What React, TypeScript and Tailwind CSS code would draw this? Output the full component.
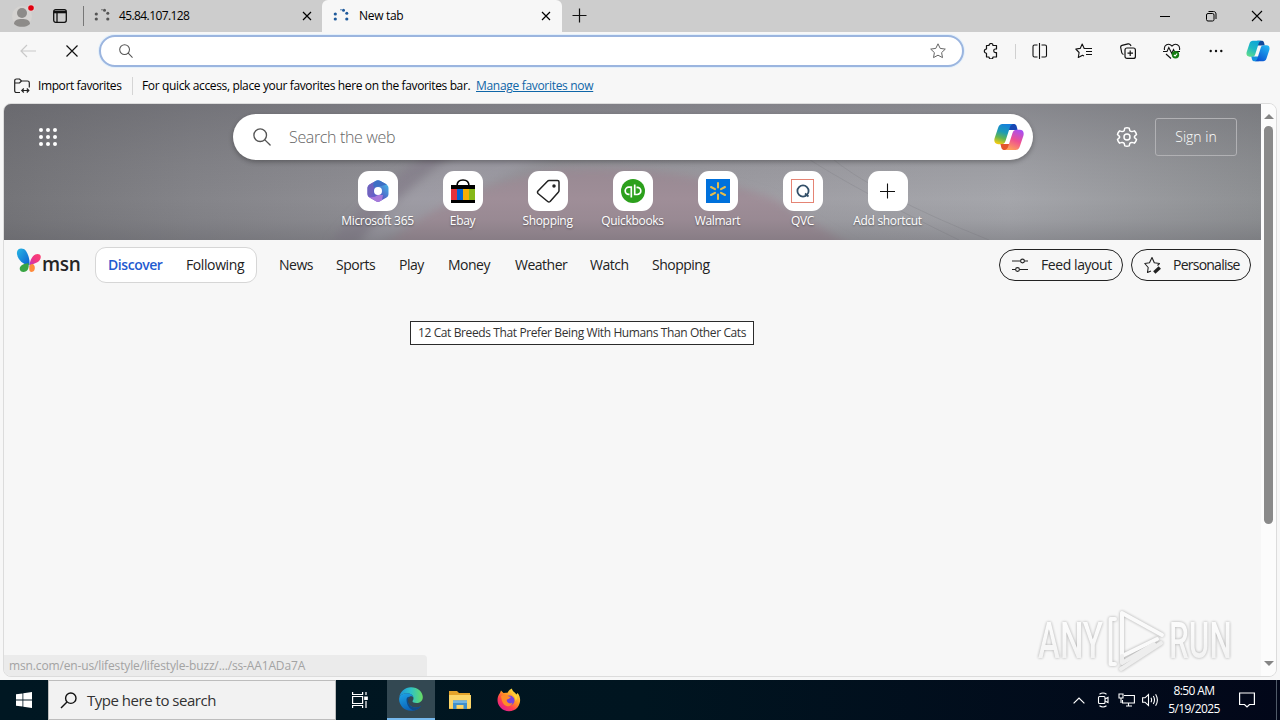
import React from 'react';

const font = "font-['Open_Sans','Noto_Sans',sans-serif]";

interface IconProps {
  className?: string;
}

const navItems = [
  { label: 'News', width: 'w-[57px]' },
  { label: 'Sports', width: 'w-[63px]' },
  { label: 'Play', width: 'w-[49px]' },
  { label: 'Money', width: 'w-[67px]' },
  { label: 'Weather', width: 'w-[75px]' },
  { label: 'Watch', width: 'w-[62px]' },
  { label: 'Shopping', width: 'w-[62px]' },
];

const LoadingDots = ({ className }: IconProps) => (
  <svg width="16" height="16" viewBox="0 0 16 16" className={className} fill="currentColor">
    <circle cx="2.3" cy="6" r="1.6" />
    <circle cx="2.3" cy="11" r="1.6" />
    <circle cx="8" cy="1.800" r="0.700" />
    <circle cx="10.500" cy="2.200" r="1.500" />
    <circle cx="13.800" cy="5.300" r="1.500" />
    <circle cx="13.800" cy="11" r="1.600" />
  </svg>
);

const CloseIcon = ({ className }: IconProps) => (
  <svg width="10" height="10" viewBox="0 0 10 10" className={className} stroke="currentColor" strokeWidth="1.2">
    <path d="M1 1l8 8M9 1L1 9" />
  </svg>
);

const SearchIcon = ({ className }: IconProps) => (
  <svg viewBox="0 0 20 20" className={className} fill="none" stroke="currentColor" strokeWidth="1.5" strokeLinecap="round">
    <circle cx="8" cy="8" r="7" />
    <path d="M13.200 13.200L19 19" />
  </svg>
);

const CopilotBlue = () => (
  <svg width="24" height="22" viewBox="0 0 30 28">
    <defs>
      <linearGradient id="cbLeft" x1="0.7" y1="0" x2="0.2" y2="1">
        <stop offset="0" stopColor="#0ca5d8" />
        <stop offset="0.5" stopColor="#1fb8c4" />
        <stop offset="1" stopColor="#5fdc8c" />
      </linearGradient>
      <linearGradient id="cbRight" x1="0.8" y1="0" x2="0.2" y2="1">
        <stop offset="0" stopColor="#21b4f3" />
        <stop offset="1" stopColor="#0a4fd0" />
      </linearGradient>
    </defs>
    <path d="M14 1h5.500c2.600 0 3.200 1.500 4 6h-9z" fill="#11489a" />
    <path d="M8.500 1H19c-2 .7-2.800 2-3.500 4.500L11.500 18c-.8 2.300-2 3.200-4 3.200H4.200C.9 21.200-.3 18.600.6 15.300L4.200 4.500C5 2.200 6.300 1 8.500 1z" fill="url(#cbLeft)" />
    <path d="M16 27h-5.500c-2.600 0-3.200-1.500-4-6h9z" fill="#1592df" />
    <path d="M21.500 27H11c2-.7 2.800-2 3.500-4.500L18.500 10c.8-2.300 2-3.200 4-3.200h3.300c3.300 0 4.500 2.600 3.600 5.900L25.800 23.500c-.8 2.300-2.100 3.500-4.300 3.500z" fill="url(#cbRight)" />
  </svg>
);

const CopilotColor = () => (
  <svg width="30" height="28" viewBox="0 0 30 28">
    <defs>
      <linearGradient id="ccLeft" x1="0.6" y1="0" x2="0.3" y2="1">
        <stop offset="0" stopColor="#1580dc" />
        <stop offset="0.4" stopColor="#1d9bb5" />
        <stop offset="0.7" stopColor="#64b550" />
        <stop offset="1" stopColor="#f4cb12" />
      </linearGradient>
      <linearGradient id="ccRight" x1="0.7" y1="0" x2="0.3" y2="1">
        <stop offset="0" stopColor="#a94ff0" />
        <stop offset="0.5" stopColor="#ee5091" />
        <stop offset="1" stopColor="#ffa05a" />
      </linearGradient>
    </defs>
    <path d="M14 1h5.500c2.600 0 3.200 1.500 4 6h-9z" fill="#1747b4" />
    <path d="M8.500 1H19c-2 .7-2.800 2-3.500 4.500L11.500 18c-.8 2.300-2 3.200-4 3.200H4.200C.9 21.200-.3 18.600.6 15.300L4.200 4.500C5 2.200 6.300 1 8.500 1z" fill="url(#ccLeft)" />
    <path d="M16 27h-5.500c-2.600 0-3.200-1.500-4-6h9z" fill="#e4552b" />
    <path d="M21.500 27H11c2-.7 2.800-2 3.500-4.500L18.500 10c.8-2.300 2-3.200 4-3.200h3.300c3.300 0 4.500 2.600 3.600 5.900L25.800 23.500c-.8 2.300-2.100 3.500-4.300 3.500z" fill="url(#ccRight)" />
  </svg>
);

const TabStrip = () => (
  <div className="flex h-8 shrink-0 bg-[#cdcdcd]">
    <div className="flex w-[83px] items-center pl-[12px]">
      <svg width="24" height="24" viewBox="0 0 24 24">
        <circle cx="10" cy="12" r="10" fill="#d5d3d1" />
        <circle cx="10" cy="9" r="5" fill="#8d8b89" />
        <path d="M2 20c0-4 3.500-5 8-5s8 1 8 5c-2 2-5 2.800-8 2.800S4 22 2 20z" fill="#8d8b89" />
        <circle cx="19" cy="4" r="3.600" fill="#e8d0d0" />
        <circle cx="19" cy="4" r="2.800" fill="#e0000f" />
      </svg>
      <svg width="14" height="14" viewBox="0 0 14 14" className="ml-[17px]" fill="none" stroke="#111" strokeWidth="1.300">
        <rect x="0.700" y="0.700" width="12.600" height="12.600" rx="2" />
        <path d="M1 3h12" strokeWidth="2.600" />
        <path d="M4 4v9" />
      </svg>
    </div>
    <div className="flex h-[31px] w-[239px] items-center">
      <div className="h-5 w-px bg-[#777]" />
      <LoadingDots className="ml-[10px] text-[#555]" />
      <span className="ml-[9px] w-[183px] text-xs tracking-[-0.600px] text-black">45.84.107.128</span>
      <CloseIcon className="text-black" />
    </div>
    <div className="flex h-8 w-[240px] items-center rounded-t-[6px] bg-[#f7f7f7]">
      <LoadingDots className="ml-[11px] text-[#1f5a9c]" />
      <span className="ml-[10px] w-[182px] text-xs tracking-[-0.300px] text-black">New tab</span>
      <CloseIcon className="text-black" />
    </div>
    <div className="flex h-[31px] flex-1 items-center pl-[10px]">
      <svg width="15" height="15" viewBox="0 0 15 15" stroke="#111" strokeWidth="1.200">
        <path d="M7.500 0.500v14M0.500 7.500h14" />
      </svg>
    </div>
    <div className="flex w-[138px] items-center justify-around text-black">
      <svg width="12" height="12" viewBox="0 0 12 12" stroke="currentColor">
        <path d="M1 6.500h10" />
      </svg>
      <svg width="12" height="12" viewBox="0 0 12 12" fill="none" stroke="currentColor">
        <rect x="1.500" y="3.500" width="7.500" height="7.500" rx="1.500" />
        <path d="M3.500 1.500h5c1.500 0 2.500 1 2.500 2.500v5" />
      </svg>
      <svg width="12" height="12" viewBox="0 0 12 12" stroke="currentColor" strokeWidth="1.100">
        <path d="M1 1l10 10M11 1L1 11" />
      </svg>
    </div>
  </div>
);

const Toolbar = () => (
  <div className="flex h-[38px] shrink-0 items-center text-[#222]">
    <svg width="16" height="14" viewBox="0 0 16 14" className="ml-[20px]" fill="none" stroke="#c9c9c9" strokeWidth="1.200">
      <path d="M7 1L1 7l6 6M1 7h15" />
    </svg>
    <svg width="12" height="12" viewBox="0 0 12 12" className="ml-[30px]" stroke="#111" strokeWidth="1.200">
      <path d="M0.500 0.500l11 11M11.500 0.500l-11 11" />
    </svg>
    <div className="ml-[21px] flex h-8 w-[865px] items-center justify-between rounded-full border-2 border-[#9bb5df] bg-white pr-[16px] pl-[18px] shadow-[0_0_0_1px_#e3f0fb]">
      <SearchIcon className="h-[14px] w-[14px] text-[#555]" />
      <svg width="16" height="16" viewBox="0 0 16 16" fill="none" stroke="#666" strokeLinejoin="round">
        <path d="M8 .8l2.200 4.600 5.100.7-3.700 3.500.9 5L8 12.200l-4.500 2.400.9-5L.7 6.100l5.100-.7z" />
      </svg>
    </div>
    {/* Extensions */}
    <svg width="16" height="16" viewBox="0 0 16 16" className="ml-[19px]" fill="none" stroke="#111" strokeWidth="1.200" strokeLinejoin="round">
      <path d="M3.500 2.500H6a2 2 0 0 1 4 0h3.500V6H12.500a1.800 1.800 0 0 0 0 3.600h1v4.400H10a2 2 0 0 1-4 0H3.500v-3.700a2 2 0 0 1 0-4.300z" />
    </svg>
    <div className="ml-[16px] h-[15px] w-px bg-[#d0d0d0]" />
    {/* Split screen */}
    <svg width="16" height="16" viewBox="0 0 16 16" className="ml-[16px]" fill="none" stroke="#111" strokeWidth="1.100">
      <path d="M7.500 0v16M5.500 2H2.500Q1 2 1 3.500v9Q1 14 2.500 14h3M9.500 2h3.500Q14.500 2 14.500 3.500v9q0 1.500-1.500 1.500H9.500" />
    </svg>
    <svg width="17" height="16" viewBox="0 0 17 16" className="ml-[27px]" fill="none" stroke="#111" strokeWidth="1.100" strokeLinejoin="round">
      <path d="M11 5.500H9.200L7.200 1 5.200 5.400.8 6l3.300 3.500-.8 5 4.200-2.300 1.500.8M11 5.500h6M11 8.500h6M11 11.500h6" />
    </svg>
    {/* Collections */}
    <svg width="16" height="16" viewBox="0 0 16 16" className="ml-[28px]" fill="none" stroke="#111" strokeWidth="1.200">
      <rect x="5" y="5" width="10.400" height="10.400" rx="2" />
      <path d="M10.200 7.500v5.500M7.500 10.200H13M3.500 11.500Q2 11 1.700 9.500L.7 4.500Q.4 2.800 2 2.400l6-1.500Q9.700.5 10.500 2l.5 1" />
    </svg>
    {/* Browser essentials */}
    <svg width="18" height="16" viewBox="0 0 18 16" className="ml-[27px]" fill="none" stroke="#111" strokeWidth="1.100">
      <path d="M1.500 7C.5 2 5.500-.5 9 3c3.500-3.500 8.500-1 7.500 4M0 8.500h4l1.800-4 3 6 1.700-4 1 2H17M3 11l5 4.500" />
      <circle cx="12.500" cy="11.800" r="3.700" fill="#137c10" stroke="none" />
      <path d="M10.900 12l1.200 1 2-2.400" stroke="#fff" />
    </svg>
    <svg width="14" height="4" viewBox="0 0 14 4" className="ml-[28px]" fill="#111">
      <circle cx="1.700" cy="2" r="1.200" />
      <circle cx="7" cy="2" r="1.200" />
      <circle cx="12.300" cy="2" r="1.200" />
    </svg>
    <div className="ml-[23px]">
      <CopilotBlue />
    </div>
  </div>
);

const FavoritesBar = () => (
  <div className="flex h-[33px] shrink-0 items-center pb-[1px] text-xs text-black">
    <svg width="16" height="16" viewBox="0 0 16 16" className="ml-[14px]" fill="none" stroke="#222" strokeWidth="1.200">
      <path d="M6 14.500H2.500Q.7 14.500 .7 12.700V2.800Q.7 1 2.500 1h3L7.500 3h6q1.800 0 1.800 1.800V9.500M.7 5h4.800L7.500 3M7.800 12.500h7M9.800 10.500l-2 2 2 2M12.800 10.500l2 2-2 2" />
    </svg>
    <span className="ml-[8px] w-[94px] tracking-[-0.400px] whitespace-nowrap">Import favorites</span>
    <div className="h-[18px] w-px bg-[#d5d5d5]" />
    <span className="ml-[9px] w-[334px] tracking-[-0.360px] whitespace-nowrap">
      For quick access, place your favorites here on the favorites bar.
    </span>
    <a className="tracking-[-0.310px] whitespace-nowrap text-[#0f66a8] underline">Manage favorites now</a>
  </div>
);

// Blurred artwork behind the search box
const HeroBackdrop = () => (
  <svg className="absolute inset-0" width="1257" height="136" viewBox="0 0 1257 136" preserveAspectRatio="none">
    <defs>
      <linearGradient id="heroBase" x1="0" y1="0" x2="1" y2="0">
        <stop offset="0" stopColor="#747478" />
        <stop offset="0.150" stopColor="#848489" />
        <stop offset="0.350" stopColor="#949399" />
        <stop offset="0.600" stopColor="#9f9ea4" />
        <stop offset="0.800" stopColor="#a5a6ab" />
        <stop offset="1" stopColor="#8e9093" />
      </linearGradient>
      <linearGradient id="heroShade" x1="0" y1="0" x2="0" y2="1">
        <stop offset="0" stopColor="#5a5a61" stopOpacity="0.400" />
        <stop offset="0.450" stopColor="#606066" stopOpacity="0.120" />
        <stop offset="0.700" stopColor="#606066" stopOpacity="0" />
        <stop offset="0.850" stopColor="#606066" stopOpacity="0.100" />
        <stop offset="1" stopColor="#5c5c62" stopOpacity="0.350" />
      </linearGradient>
      <filter id="heroBlur">
        <feGaussianBlur stdDeviation="4" />
      </filter>
    </defs>
    <rect width="1257" height="136" fill="url(#heroBase)" />
    <g filter="url(#heroBlur)">
      <path d="M325 140Q380 70 450 35l30-5Q400 80 355 140z" fill="#857d8c" opacity="0.600" />
      <path d="M355 140Q400 80 480 35L620 30Q500 60 375 140z" fill="#a5a3ad" opacity="0.600" />
      <path d="M372 150Q440 82 560 65Q680 60 770 95L860 150z" fill="#9f8e98" />
    </g>
    <path d="M800 52Q850 85 955 136M825 52Q870 90 985 136" stroke="#85838a" strokeOpacity="0.350" fill="none" />
    <rect width="1257" height="136" fill="url(#heroShade)" />
  </svg>
);

const shortcuts = [
  {
    label: 'Microsoft 365',
    icon: (
      <svg width="24" height="24" viewBox="0 0 24 24">
        <defs>
          <linearGradient id="m365" x1="0" y1="1" x2="1" y2="0">
            <stop offset="0" stopColor="#8a5bd0" />
            <stop offset="0.450" stopColor="#5260c4" />
            <stop offset="1" stopColor="#42c8ef" />
          </linearGradient>
        </defs>
        <path d="M10 1.800q2-1.200 4 0l6.500 3.600q2 1.200 2 3.300v6.600q0 2.100-2 3.300L14 22.200q-2 1.200-4 0l-6.500-3.600q-2-1.200-2-3.300V8.700q0-2.100 2-3.300z" fill="url(#m365)" />
        <path d="M10 1.800Q5.500 4.500 8 8L7 14l-4 4q-1.500-1-1.500-3V8.700q0-2.100 2-3.300z" fill="#6f62be" />
        <path d="M10 1.800Q6 5 8 8l7-1 6-1.500L14 1.800q-2-1.200-4 0z" fill="#3d6fc5" />
        <path d="M3 18q5 1 9-2h5l-1 5-2 1.200q-2 1.200-4 0l-6.500-3.600z" fill="#a778da" />
        <circle cx="12" cy="12" r="4" fill="#fff" />
      </svg>
    ),
  },
  {
    label: 'Ebay',
    icon: (
      <svg width="24" height="26" viewBox="0 0 24 26">
        <path d="M6 8Q6 2 12 2t6 6" fill="none" stroke="#000" strokeWidth="1.600" />
        <path d="M0 7h24v18H0z" fill="#000" />
        <path d="M0 11h6v11H0z" fill="#e53238" />
        <path d="M6 11h6v11H6z" fill="#0064d2" />
        <path d="M12 11h6v11h-6z" fill="#f5af02" />
        <path d="M18 11h6v11h-6z" fill="#86b817" />
      </svg>
    ),
  },
  {
    label: 'Shopping',
    icon: (
      <svg width="24" height="24" viewBox="0 0 24 24" fill="none" stroke="#222" strokeWidth="1.500" strokeLinejoin="round">
        <path d="M13 1.500h8.500Q23 1.500 23 3v8.500q0 1-.7 1.700l-8.200 9.300q-1.200 1-2.400 0L2 14.500q-1-1.200 0-2.400L11.500 2.200q.6-.7 1.500-.7z" />
        <circle cx="18" cy="7" r="1" fill="#222" />
      </svg>
    ),
  },
  {
    label: 'Quickbooks',
    icon: (
      <svg width="24" height="24" viewBox="0 0 24 24" fill="none" stroke="#fff" strokeWidth="1.700">
        <circle cx="12" cy="12" r="12" fill="#2ca01c" stroke="none" />
        <path d="M10.300 18.500V8.200H7.800a3.600 3.600 0 0 0 0 7.200h.7M13.700 5.500v10h2.500a3.600 3.600 0 0 0 0-7.200h-.7" />
      </svg>
    ),
  },
  {
    label: 'Walmart',
    icon: (
      <svg width="24" height="24" viewBox="0 0 24 24" stroke="#e5bd4c" strokeWidth="2" strokeLinecap="round">
        <rect width="24" height="24" fill="#0071dc" stroke="none" />
        <path d="M12 4v4.500M12 15.500V20M5 8l4 2.200M15 13.800l4 2.200M5 16l4-2.200M15 10.200L19 8" />
      </svg>
    ),
  },
  {
    label: 'QVC',
    icon: (
      <svg width="24" height="24" viewBox="0 0 24 24" fill="none">
        <rect x="0.500" y="0.500" width="22" height="23" stroke="#e58474" />
        <circle cx="12" cy="12" r="5.600" stroke="#335069" strokeWidth="1.800" />
        <path d="M14 14.500l3.500 3" stroke="#335069" strokeWidth="1.800" />
      </svg>
    ),
  },
  {
    label: 'Add shortcut',
    icon: (
      <svg width="16" height="16" viewBox="0 0 16 16" stroke="#111" strokeWidth="1.100">
        <path d="M7.500 .5v15M0 8.500h15" />
      </svg>
    ),
  },
];

const Hero = () => (
  <div className="relative h-[136px] shrink-0 overflow-hidden">
    <HeroBackdrop />
    <div className="relative mt-[10px] flex h-[46px] items-center pl-[35px] text-white">
      <svg width="18" height="18" viewBox="0 0 18 18" fill="#fff">
        {[2, 9, 16].map((cy) => [2, 9, 16].map((cx) => <circle key={`${cx}-${cy}`} cx={cx} cy={cy} r="2" />))}
      </svg>
      <div className="ml-[176px] flex h-[46px] w-[800px] items-center rounded-full bg-white pr-[9px] pl-[20px] shadow-[0_2px_5px_rgba(0,0,0,0.300)]">
        <SearchIcon className="h-[18px] w-[18px] text-[#555]" />
        <span className="ml-[18px] flex-1 text-base font-light tracking-[-0.350px] text-[#666]">Search the web</span>
        <CopilotColor />
      </div>
      <svg width="22" height="22" viewBox="0 0 24 24" className="ml-[83px]" fill="none" stroke="#fff" strokeWidth="1.600" strokeLinejoin="round">
        <path d="M9.600 2.300Q12 1.600 14.400 2.300l.7 2.900q1 1 2.300.9l2.700-.8q1.700 1.700 2.300 4L20.200 11.300q-.3.700 0 1.400l2.200 2q-.6 2.300-2.300 4l-2.700-.8q-1.300-.1-2.300.9l-.7 2.900q-2.400.7-4.800 0l-.7-2.900q-1-1-2.300-.9l-2.700.8q-1.700-1.700-2.300-4l2.200-2q.3-.7 0-1.400l-2.200-2q.6-2.300 2.300-4l2.700.8q1.300.1 2.300-.9z" />
        <circle cx="12" cy="12" r="3.300" />
      </svg>
      <button className="ml-[17px] h-[38px] w-[82px] rounded-[3px] border border-[#b1b1b4] text-sm font-light">Sign in</button>
    </div>
    <div className="relative mt-[11px] flex pl-[331px]">
      {shortcuts.map((item) => (
        <div key={item.label} className="flex w-[85px] flex-col items-center">
          <div className="flex h-10 w-10 items-center justify-center rounded-[11px] bg-white">{item.icon}</div>
          <span className="mt-[1px] text-xs leading-[18px] tracking-[-0.320px] whitespace-nowrap text-white [text-shadow:0_1px_2px_rgba(0,0,0,0.400)]">
            {item.label}
          </span>
        </div>
      ))}
    </div>
  </div>
);

const MsnLogo = () => (
  <div className="flex h-[30px] w-[70px]">
    <svg width="26" height="28" viewBox="0 0 26 28">
      <defs>
        <linearGradient id="wingBlue" x1="0" y1="0" x2="1" y2="1">
          <stop offset="0" stopColor="#27b7e4" />
          <stop offset="1" stopColor="#0c5fd0" />
        </linearGradient>
        <linearGradient id="wingPink" x1="0" y1="1" x2="1" y2="0">
          <stop offset="0" stopColor="#b03bd0" />
          <stop offset="0.500" stopColor="#f03585" />
          <stop offset="1" stopColor="#ff4270" />
        </linearGradient>
      </defs>
      <path d="M1 6C0 0 7-1 10 3c2 3 4 8 3.500 14C7 17 2 12 1 6z" fill="url(#wingBlue)" />
      <path d="M12.500 15c1 5-1 9-5 9-4.500 0-5-5-1.500-7 2-1.500 4-1 6.500-2z" fill="#39a544" />
      <path d="M13.500 19c0-7 3.500-13 8-13 4.500 0 4 5 1 7.500-3 2-6 2-9 5.500z" fill="url(#wingPink)" />
      <path d="M13.500 18c1-2.500 4-3 5 0s-.5 6-3 6-2.500-3.500-2-6z" fill="#ff8b3d" />
    </svg>
    <span className="mt-[4px] text-[19px] leading-[24px] font-semibold tracking-[-0.300px] text-[#252525]">msn</span>
  </div>
);

const FeedNav = () => (
  <div className="flex h-[50px] shrink-0 items-center pr-[10px] pl-[12px] text-sm text-[#222]">
    <div className="mt-[-4px]">
      <MsnLogo />
    </div>
    <div className="ml-[9px] flex h-[36px] w-[162px] items-center rounded-[11px] border border-[#d6d6d6] bg-white pl-[12px]">
      <span className="w-[78px] font-semibold tracking-[-0.450px] text-[#1f5bd0]">Discover</span>
      <span className="tracking-[-0.400px]">Following</span>
    </div>
    <div className="ml-[22px] flex flex-1">
      {navItems.map((item) => (
        <span key={item.label} className={`${item.width} tracking-[-0.500px] whitespace-nowrap`}>
          {item.label}
        </span>
      ))}
    </div>
    <button className="flex h-8 w-[124px] items-center rounded-full border border-[#222] pl-[12px] tracking-[-0.420px] whitespace-nowrap">
      <svg width="16" height="16" viewBox="0 0 16 16" className="mr-[13px] shrink-0" fill="none" stroke="#222" strokeWidth="1.100">
        <path d="M0 4h8.500M12.500 4H16M0 12.500h3.500M7.500 12.500H16" />
        <circle cx="10.500" cy="4" r="1.900" />
        <circle cx="5.500" cy="12.500" r="1.900" />
      </svg>
      Feed layout
    </button>
    <button className="ml-[8px] flex h-8 w-[120px] items-center rounded-full border border-[#222] pl-[12px] tracking-[-0.760px] whitespace-nowrap">
      <svg width="18" height="18" viewBox="0 0 18 18" className="mr-[11px] shrink-0" fill="none" stroke="#222" strokeWidth="1.100" strokeLinejoin="round">
        <path d="M7 15l-3.500 1.500.7-5L.8 7.500l4.700-.7L8 1.500l2.300 5.300 5.200.7-2 2" />
        <path d="M15.800 11.500l-5.500 5" strokeWidth="3.400" />
      </svg>
      Personalise
    </button>
  </div>
);

const markText =
  'bg-gradient-to-b from-white via-[#f8f8f8] to-[#ebebeb] bg-clip-text text-[50px] leading-[70px] font-medium text-transparent';

const Watermark = () => (
  <div className="absolute top-[502px] left-[1034px] flex h-[70px] w-[200px] font-[Roboto] opacity-90 drop-shadow-[0_0_1.500px_rgba(0,0,0,0.350)]">
    <div className="w-[65px]">
      <div className={`w-[100px] origin-left scale-x-[0.660] ${markText}`}>ANY</div>
    </div>
    <svg width="66" height="70" viewBox="0 0 66 70" fill="none" stroke="#fafafa" strokeWidth="4" strokeLinejoin="round" strokeLinecap="round">
      <path d="M12 13H7.500v45H12" />
      <path d="M59 29L19 7v43l35-17" />
      <path d="M18 63l40-26M19 50v7l32-19" stroke="#ededed" />
    </svg>
    <div className="w-[66px]">
      <div className={`w-[102px] origin-left scale-x-[0.630] ${markText}`}>RUN</div>
    </div>
  </div>
);

const EdgeLogo = () => (
  <svg width="24" height="24" viewBox="0 0 24 24">
    <defs>
      <linearGradient id="edgeTop" x1="0" y1="0.500" x2="1" y2="0.500">
        <stop offset="0" stopColor="#1b92dc" />
        <stop offset="0.500" stopColor="#2fc2c5" />
        <stop offset="1" stopColor="#68dc62" />
      </linearGradient>
      <linearGradient id="edgeLow" x1="0" y1="0" x2="0.500" y2="1">
        <stop offset="0" stopColor="#1da5e8" />
        <stop offset="1" stopColor="#0b5fb4" />
      </linearGradient>
    </defs>
    <path d="M.2 10.500C1 4.500 6 .2 12 .2c7 0 11.800 5 11.800 9.800 0 4-3 6-6.300 6-2.500 0-4-.8-4-1.700 0-.7 1-1 1-3 0-2.500-2.500-5-6.500-5-4.500 0-7 2.500-7.800 4.200z" fill="url(#edgeTop)" />
    <path d="M.1 12C.3 8.500 3.500 6.300 8 6.300c3.500 0 6.200 2 6.500 4.500-1-1.500-2.500-1.800-4-1-3 2-2.500 8 3 10.200 3 1.200 5.500.5 8.500-1C20 22 16 24 12 23.800 5 23.800 0 18 .1 12z" fill="url(#edgeLow)" />
    <path d="M7.500 12.500c0-1.500 1-2.500 3-2.700-3 3-1.500 8.500 3 10.200 3 1.200 5.500.5 8.500-1-1.500 2.500-4.500 4.300-7 4.500-4.500-1-7.500-6-7.500-11z" fill="#104a88" />
  </svg>
);

const FolderLogo = () => (
  <svg width="22" height="20" viewBox="0 0 22 20">
    <path d="M0 1h8l2 2h11v16H0z" fill="#e3a32a" />
    <path d="M0 5h22v13.500H0z" fill="#fbd568" />
    <path d="M4 10.500h14V19h-3.500v-4h-7v4H4z" fill="#3f8fcb" />
    <path d="M4 10.500h14V13H4z" fill="#72b5e2" />
  </svg>
);

const FirefoxLogo = () => (
  <svg width="24" height="24" viewBox="0 0 24 24">
    <defs>
      <linearGradient id="foxFire" x1="0.800" y1="0.100" x2="0.200" y2="0.900">
        <stop offset="0" stopColor="#ffe23e" />
        <stop offset="0.400" stopColor="#ff9324" />
        <stop offset="0.700" stopColor="#ff3f50" />
        <stop offset="1" stopColor="#e4208c" />
      </linearGradient>
    </defs>
    <path d="M3 5l1-2.500L6.500 5q2-.5 4-.2Q12 1.500 15 .5c0 3 3 3.500 4.500 6l1-1.500C24 9 24 15 20.500 19.500 16 24.500 8 24.500 3.500 19.500-.5 15-.3 9 3 5z" fill="url(#foxFire)" />
    <circle cx="12.500" cy="12.500" r="5" fill="#7543df" />
    <path d="M4 8q4-2 8 .5L14 9q-1.500 2-4 2.500-1 2 1.500 3.500 2 1 4-.5-1 4-5.500 3.800Q5 17.500 4 8z" fill="#ff8c28" />
    <path d="M14 5q4.500 3 4.500 8 2-2 1.500-5z" fill="#ffd638" />
  </svg>
);

const Taskbar = () => (
  <div className="flex h-10 shrink-0 items-stretch bg-gradient-to-r from-[#001722] via-[#001520] to-[#020719] text-white">
    <div className="flex w-12 items-center justify-center">
      <svg width="16" height="16" viewBox="0 0 16 16" fill="#fff">
        <path d="M0 2.300l6.500-.9v6.200H0zM7.300 1.300L16 0v7.600H7.300zM0 8.400h6.500v6.200L0 13.700zM7.300 8.400H16V16l-8.700-1.300z" />
      </svg>
    </div>
    <div className="flex w-72 items-center border border-[#bdbdbd] bg-[#f2f2f2] pl-[11px]">
      <svg width="17" height="17" viewBox="0 0 17 17" fill="none" stroke="#111" strokeWidth="1.400">
        <circle cx="10.800" cy="6.200" r="5.200" />
        <path d="M7 10L1 16" />
      </svg>
      <span className="ml-[10px] text-[15px] tracking-[-0.480px] text-[#333]">Type here to search</span>
    </div>
    <div className="flex w-[51px] items-center justify-center pr-[3px]">
      <svg width="16" height="16" viewBox="0 0 16 16" fill="none" stroke="#fff" strokeWidth="1.200">
        <path d="M.6 0v2.500h10V0M.6 16v-2.500h10V16M.6 4.500h10v7H.6zM14 0v3M14 9v7" />
        <path d="M12.800 5h2.400v2.500h-2.400z" fill="#fff" />
      </svg>
    </div>
    <div className="flex w-12 items-center justify-center border-b-2 border-[#76b9ed] bg-[#334852]">
      <EdgeLogo />
    </div>
    <div className="flex w-[50px] items-center justify-center">
      <FolderLogo />
    </div>
    <div className="flex w-12 items-center justify-center">
      <FirefoxLogo />
    </div>
    <div className="flex flex-1 items-center justify-end">
      <svg width="12" height="7" viewBox="0 0 12 7" fill="none" stroke="#fff" strokeWidth="1.200">
        <path d="M.6 6.400L6 1l5.400 5.400" />
      </svg>
      {/* Meet now */}
      <svg width="12" height="16" viewBox="0 0 12 16" className="ml-[12px]" fill="none" stroke="#fff" strokeWidth="1.100">
        <rect x="1.500" y="4.500" width="6.500" height="7" rx="1" />
        <path d="M8 7l3-1.500v5L8 9M2.500 2.200Q6-.2 9.500 2.200M2.500 13.800q3.500 2.400 7 0" />
      </svg>
      <svg width="17" height="14" viewBox="0 0 17 14" className="ml-[9px]" fill="none" stroke="#fff" strokeWidth="1.100">
        <path d="M6 2.500h10.400v7.500H4.500V7M8 13h6M10.500 10v3M1 1h4v4H1zM3 5v5" />
      </svg>
      <svg width="17" height="14" viewBox="0 0 17 14" className="ml-[7px]" fill="none" stroke="#fff" strokeWidth="1.100">
        <path d="M.6 4.800h2.400L6.500 1.500v11L3 9.200H.6zM9 4.800q1.200 2.200 0 4.400M11.300 3q2.400 4 0 8M13.600 1.200q3.600 5.800 0 11.600" />
      </svg>
      <div className="ml-[5px] flex w-[60px] flex-col items-center text-xs leading-[18px] tracking-[-0.600px] whitespace-nowrap">
        <span>8:50 AM</span>
        <span>5/19/2025</span>
      </div>
      <svg width="16" height="16" viewBox="0 0 16 16" className="mr-[21px] ml-[15px]" fill="none" stroke="#fff" strokeWidth="1.200">
        <path d="M.6 1h14.800v11.500H10.500L8 15l-2.500-2.500H.6z" />
      </svg>
      <div className="mr-[3px] h-10 w-px bg-[#505a68]" />
    </div>
  </div>
);

const App = () => {
  return (
    <div className={`${font} flex h-[720px] w-[1280px] flex-col overflow-hidden bg-[#f7f7f7]`}>
      <TabStrip />
      <Toolbar />
      <FavoritesBar />
      <div className="relative mx-[3px] mb-[3px] flex h-[574px] shrink-0 overflow-hidden rounded-[8px] border border-[#dcdcdc] bg-[#f7f7f7]">
        <div className="flex w-[1257px] flex-col">
          <Hero />
          <FeedNav />
        </div>
        {/* Scrollbar */}
        <div className="flex flex-1 flex-col items-center bg-[#fcfcfc] pt-[10px] pb-[10px]">
          <div className="h-0 w-0 border-x-[5px] border-b-[5px] border-x-transparent border-b-[#858585]" />
          <div className="mt-[7px] h-[398px] w-[9px] rounded-full bg-[#8a8a8a]" />
          <div className="mt-auto h-0 w-0 border-x-[5px] border-t-[5px] border-x-transparent border-t-[#858585]" />
        </div>
        {/* Hover tooltip */}
        <div className="absolute top-[217px] left-[406px] flex h-6 w-[344px] items-center border border-[#2b2b2b] bg-white pl-[7px] text-xs tracking-[-0.390px] whitespace-nowrap text-[#333]">
          12 Cat Breeds That Prefer Being With Humans Than Other Cats
        </div>
        {/* Link status bubble */}
        <div className="absolute bottom-0 left-0 flex h-[21px] w-[423px] items-center rounded-tr-[4px] bg-[#ebebeb] pl-[5px] text-xs tracking-[-0.140px] whitespace-nowrap text-[#a3a3a3]">
          msn.com/en-us/lifestyle/lifestyle-buzz/.../ss-AA1ADa7A
        </div>
        <Watermark />
      </div>
      <Taskbar />
    </div>
  );
};

export default App;
